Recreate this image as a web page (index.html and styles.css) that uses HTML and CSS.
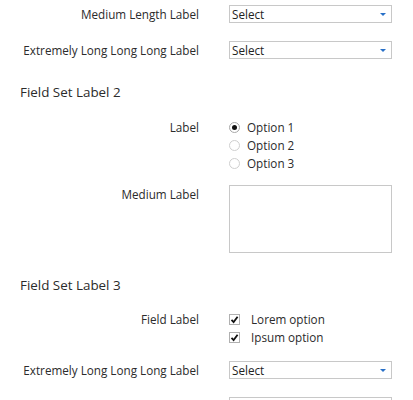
FILE: index.html
```html
<!DOCTYPE html>
<html>
<head>
<meta charset="utf-8">
<link rel="stylesheet" href="styles.css">
</head>
<body>
<div class="form">
  <div class="row r1">
    <div class="label">Medium Length Label</div>
    <div class="select"><span>Select</span><i class="arrow"></i></div>
  </div>
  <div class="row r2">
    <div class="label">Extremely Long Long Long Label</div>
    <div class="select"><span>Select</span><i class="arrow"></i></div>
  </div>

  <div class="legend lg2">Field Set Label 2</div>
  <div class="row r3">
    <div class="label">Label</div>
    <div class="options">
      <div class="opt"><span class="radio checked"></span><span class="rtext">Option 1</span></div>
      <div class="opt"><span class="radio"></span><span class="rtext">Option 2</span></div>
      <div class="opt"><span class="radio"></span><span class="rtext">Option 3</span></div>
    </div>
  </div>
  <div class="row r4">
    <div class="label">Medium Label</div>
    <div class="textarea"></div>
  </div>

  <div class="legend lg3">Field Set Label 3</div>
  <div class="row r5">
    <div class="label">Field Label</div>
    <div class="options">
      <div class="opt"><span class="check"><svg width="9" height="9" viewBox="0 0 9 9"><path d="M1.5 4.8 L3.6 7 L7.6 1.8" fill="none" stroke="#111" stroke-width="1.8"/></svg></span><span class="ctext">Lorem option</span></div>
      <div class="opt"><span class="check"><svg width="9" height="9" viewBox="0 0 9 9"><path d="M1.5 4.8 L3.6 7 L7.6 1.8" fill="none" stroke="#111" stroke-width="1.8"/></svg></span><span class="ctext">Ipsum option</span></div>
    </div>
  </div>
  <div class="row r6">
    <div class="label">Extremely Long Long Long Label</div>
    <div class="select"><span>Select</span><i class="arrow"></i></div>
  </div>
  <div class="row r7">
    <div class="label"></div>
    <div class="input"></div>
  </div>
</div>
</body>
</html>
```
FILE: styles.css
```css
html, body {
  margin: 0;
  padding: 0;
  background: #fff;
}
body {
  font-family: "Open Sans", "Liberation Sans", sans-serif;
  font-size: 11.7px;
  color: #2b2b2b;
}
.form {
  padding: 5px 0 0 20px;
  width: 372px;
}
.row {
  display: grid;
  grid-template-columns: 179px 163px;
  column-gap: 30px;
  align-items: start;
}
.label {
  text-align: right;
  line-height: 18px;
  white-space: nowrap;
}
.r2 { margin-top: 18px; }
.r3 { margin-top: 16px; }
.r4 { margin-top: 13px; }
.r5 { margin-top: 15px; }
.r6 { margin-top: 15px; }
.r7 { margin-top: 18px; }
.legend {
  font-size: 13.4px;
  line-height: 20px;
  height: 20px;
}
.lg2 { margin-top: 23px; }
.lg3 { margin-top: 22px; }
.select {
  box-sizing: border-box;
  height: 18px;
  border: 1px solid #c8c8c8;
  display: flex;
  align-items: center;
  justify-content: space-between;
  padding: 0 5px 0 2px;
  line-height: 16px;
  color: #222;
}
.arrow {
  width: 0;
  height: 0;
  border-left: 3px solid transparent;
  border-right: 3px solid transparent;
  border-top: 3px solid #2870c8;
  margin-top: 1px;
}
.options {
  display: flex;
  flex-direction: column;
}
.opt {
  display: flex;
  align-items: center;
  height: 18px;
}
.radio {
  box-sizing: border-box;
  width: 11px;
  height: 11px;
  border-radius: 50%;
  border: 1px solid #cfcfcf;
  display: flex;
  align-items: center;
  justify-content: center;
  margin-right: 7px;
}
.radio.checked {
  border-color: #a8a8a8;
}
.radio.checked::after {
  content: "";
  width: 5px;
  height: 5px;
  border-radius: 50%;
  background: #111;
}
.check {
  box-sizing: border-box;
  width: 11px;
  height: 11px;
  border: 1px solid #b0b0b0;
  display: flex;
  align-items: center;
  justify-content: center;
  margin-right: 11px;
}
.check svg { display: block; }
.textarea {
  box-sizing: border-box;
  height: 68px;
  border: 1px solid #c8c8c8;
}
.input {
  box-sizing: border-box;
  height: 18px;
  border: 1px solid #c8c8c8;
}
```
